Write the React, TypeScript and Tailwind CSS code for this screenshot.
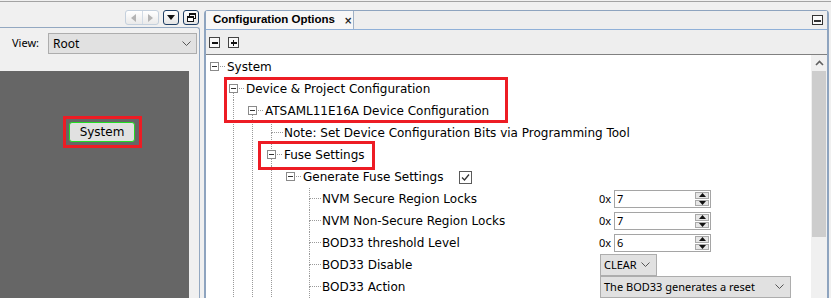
import React from "react";

// Tahoma-ish tree text and Segoe-ish control text
const treeFont = "font-['DejaVu_Sans',sans-serif] text-[12px] text-black";
const uiFont = "font-['Noto_Sans',sans-serif] text-[11px] text-black";

type Row = {
  label: string;
  depth: number;
  kind: "exp" | "leaf";
  guides: number[];
  above?: boolean;
  below?: boolean;
  check?: boolean;
  control?: React.ReactNode;
};

function Guide({ on }: { on: boolean }) {
  return (
    <svg width="19" height="22" className="shrink-0" shapeRendering="crispEdges">
      {on && <line x1="8.5" y1="0" x2="8.5" y2="22" stroke="#9a9a9a" strokeDasharray="1 1" />}
    </svg>
  );
}

function Node({ kind, above, below }: { kind: "exp" | "leaf"; above?: boolean; below?: boolean }) {
  return (
    <svg width="21" height="22" className="shrink-0" shapeRendering="crispEdges">
      {kind === "exp" ? (
        <>
          {above && <line x1="8.5" y1="0" x2="8.5" y2="6" stroke="#9a9a9a" strokeDasharray="1 1" />}
          {below && <line x1="8.5" y1="15" x2="8.5" y2="22" stroke="#9a9a9a" strokeDasharray="1 1" />}
          <rect x="4.5" y="6.5" width="8" height="8" fill="#fff" stroke="#8a8a8a" />
          <line x1="6" y1="10.5" x2="11" y2="10.5" stroke="#333" />
          <line x1="14" y1="10.5" x2="20" y2="10.5" stroke="#9a9a9a" strokeDasharray="1 1" />
        </>
      ) : (
        <>
          {above && <line x1="8.5" y1="0" x2="8.5" y2="11" stroke="#9a9a9a" strokeDasharray="1 1" />}
          {below && <line x1="8.5" y1="11" x2="8.5" y2="22" stroke="#9a9a9a" strokeDasharray="1 1" />}
          <line x1="9" y1="10.5" x2="20" y2="10.5" stroke="#9a9a9a" strokeDasharray="1 1" />
        </>
      )}
    </svg>
  );
}

function Chevron() {
  return (
    <svg width="9" height="6" viewBox="0 0 9 6" className="shrink-0">
      <polyline points="0.5,0.5 4.5,4.5 8.5,0.5" fill="none" stroke="#555" strokeWidth="1" />
    </svg>
  );
}

function Spinner({ value }: { value: string }) {
  return (
    <div className="flex items-center gap-[2px]">
      <span className={uiFont + " w-[13px]"}>0x</span>
      <div className="flex h-[18px] w-[97px] items-stretch border border-[#a5a5a5] bg-white">
        <span className={uiFont + " flex flex-1 items-center pl-[2px]"}>{value}</span>
        <div className="flex w-[16px] flex-col gap-px p-px">
          <div className="flex flex-1 items-center justify-center border border-[#a9a9a9] bg-[#e6e6e6]">
            <svg width="7" height="4"><polygon points="3.5,0 7,4 0,4" fill="#111" /></svg>
          </div>
          <div className="flex flex-1 items-center justify-center border border-[#a9a9a9] bg-[#e6e6e6]">
            <svg width="7" height="4"><polygon points="0,0 7,0 3.5,4" fill="#111" /></svg>
          </div>
        </div>
      </div>
    </div>
  );
}

function Combo({ text, width }: { text: string; width: string }) {
  return (
    <div className={`ml-px flex h-[22px] items-center justify-between border border-[#adadad] bg-[#e1e1e1] pl-[3px] pr-[6px] ${width}`}>
      <span className={uiFont}>{text}</span>
      <Chevron />
    </div>
  );
}

const rows: Row[] = [
  { label: "System", depth: 0, kind: "exp", guides: [] },
  { label: "Device & Project Configuration", depth: 1, kind: "exp", guides: [], below: true },
  { label: "ATSAML11E16A Device Configuration", depth: 2, kind: "exp", guides: [1], below: true },
  { label: "Note: Set Device Configuration Bits via Programming Tool", depth: 3, kind: "leaf", guides: [1, 2], above: true, below: true },
  { label: "Fuse Settings", depth: 3, kind: "exp", guides: [1, 2], above: true, below: true },
  { label: "Generate Fuse Settings", depth: 4, kind: "exp", guides: [1, 2, 3], check: true },
  { label: "NVM Secure Region Locks", depth: 5, kind: "leaf", guides: [1, 2, 3], above: true, below: true, control: <Spinner value="7" /> },
  { label: "NVM Non-Secure Region Locks", depth: 5, kind: "leaf", guides: [1, 2, 3], above: true, below: true, control: <Spinner value="7" /> },
  { label: "BOD33 threshold Level", depth: 5, kind: "leaf", guides: [1, 2, 3], above: true, below: true, control: <Spinner value="6" /> },
  { label: "BOD33 Disable", depth: 5, kind: "leaf", guides: [1, 2, 3], above: true, below: true, control: <Combo text="CLEAR" width="w-[57px]" /> },
  { label: "BOD33 Action", depth: 5, kind: "leaf", guides: [1, 2, 3], above: true, below: true, control: <Combo text="The BOD33 generates a reset" width="w-[191px]" /> },
];

function TreeRow({ row }: { row: Row }) {
  return (
    <div className="flex h-[22px] items-center">
      <div className="flex h-full w-[393px] shrink-0 items-center whitespace-nowrap">
        {Array.from({ length: row.depth }).map((_, i) => (
          <Guide key={i} on={row.guides.includes(i)} />
        ))}
        <Node kind={row.kind} above={row.above} below={row.below} />
        <span className={treeFont}>{row.label}</span>
        {row.check && (
          <svg width="13" height="13" className="ml-[16px] shrink-0" shapeRendering="crispEdges">
            <rect x="0.5" y="0.5" width="12" height="12" fill="#fff" stroke="#5a5a5a" />
            <polyline points="3,6.5 5.5,9 10,3.5" fill="none" stroke="#333" strokeWidth="1.3" shapeRendering="auto" />
          </svg>
        )}
      </div>
      {row.control}
    </div>
  );
}

function SmallBtn({ children, dark }: { children: React.ReactNode; dark?: boolean }) {
  return (
    <div
      className={`flex h-[15px] w-[16px] items-center justify-center rounded-[3px] bg-gradient-to-b from-white to-[#e4e4e4] ${
        dark ? "border-[1.5px] border-[#1d3d63]" : "border border-[#b7c5d6]"
      }`}
    >
      {children}
    </div>
  );
}

export default function App() {
  return (
    <div className="relative h-[298px] w-[831px] overflow-hidden bg-[#f0f0f0]">
      <div className="h-px bg-[#f0f0f0]" />
      <div className="h-px bg-[#a3a3a3]" />
      <div className="flex h-[296px]">
        {/* Left: navigator panel */}
        <div className="flex w-[200px] shrink-0 flex-col">
          <div className="flex h-[25px] items-start justify-end gap-[4px] pr-[1px] pt-[8px]">
            <div className="flex h-[15px] w-[34px] rounded-[3px] border border-[#c4d0dd] bg-gradient-to-b from-white to-[#eaeaea]">
              <div className="flex flex-1 items-center justify-center border-r border-[#d2dbe5]">
                <svg width="5" height="8"><polygon points="5,0 5,8 0,4" fill="#b4b4b4" /></svg>
              </div>
              <div className="flex flex-1 items-center justify-center">
                <svg width="5" height="8"><polygon points="0,0 0,8 5,4" fill="#b4b4b4" /></svg>
              </div>
            </div>
            <SmallBtn dark>
              <svg width="8" height="5"><polygon points="0,0 8,0 4,5" fill="#111" /></svg>
            </SmallBtn>
            <SmallBtn dark>
              <svg width="9" height="9" shapeRendering="crispEdges">
                <rect x="2.5" y="0.5" width="6" height="5" fill="none" stroke="#111" />
                <line x1="2.5" y1="1.5" x2="8.5" y2="1.5" stroke="#111" />
                <rect x="0.5" y="3.5" width="6" height="5" fill="#fff" stroke="#111" />
                <line x1="0.5" y1="4.5" x2="6.5" y2="4.5" stroke="#111" />
              </svg>
            </SmallBtn>
          </div>
          <div className="flex flex-1 flex-col rounded-tr-[3px] border-r border-t border-[#93a8c1]">
            <div className="flex items-center pl-[12px] pr-[2px] pt-[5px]">
              <span className={uiFont + " w-[36px]"}>View:</span>
              <div className="flex h-[21px] flex-1 items-center justify-between border border-[#adadad] bg-[#e1e1e1] pl-[4px] pr-[5px]">
                <span className={uiFont + " text-[12px]"}>Root</span>
                <Chevron />
              </div>
            </div>
            <div className="mt-[17px] flex-1 pr-[10px]">
              <div className="h-full bg-[#666666] pl-[63px] pt-[45px]">
                <div className="inline-flex border-[3px] border-[#ed1c24] py-[3px] pl-[3px] pr-[4px]">
                  <div className="flex h-[20px] w-[66px] items-center justify-center rounded-[3px] border border-[#22dd22] bg-[#e1e1e1]">
                    <span className={treeFont}>System</span>
                  </div>
                </div>
              </div>
            </div>
          </div>
        </div>

        {/* Right: configuration options */}
        <div className="ml-[4px] mr-[2px] mt-[8px] flex flex-1 flex-col rounded-t-[4px] border-x-2 border-t border-[#8ea4bf]">
          <div className="flex h-[18px] items-stretch bg-[#eeeeee]">
            <div className="flex w-[148px] items-center gap-[9px] rounded-tl-[3px] border-r border-[#9fb1c6] bg-[#f7f7f7] pl-[7px]">
              <span className="font-['Liberation_Sans',sans-serif] text-[11.5px] font-bold text-black">Configuration Options</span>
              <span className="font-['DejaVu_Sans',sans-serif] text-[10px] font-bold text-[#222]">×</span>
            </div>
            <div className="flex flex-1 items-center justify-end pr-[4px]">
              <svg width="11" height="10" shapeRendering="crispEdges">
                <rect x="0.5" y="0.5" width="10" height="9" fill="#fafafa" stroke="#333" />
                <rect x="2" y="5" width="7" height="2" fill="#333" />
              </svg>
            </div>
          </div>
          <div className="h-px bg-[#8fb0d8]" />
          <div className="flex h-[24px] items-center gap-[8px] bg-[#eeeeee] pl-[3px]">
            <svg width="11" height="11" shapeRendering="crispEdges">
              <rect x="0.5" y="0.5" width="10" height="10" fill="#f8f8f8" stroke="#444" />
              <rect x="2.5" y="5" width="6" height="1.5" fill="#111" />
            </svg>
            <svg width="11" height="11" shapeRendering="crispEdges">
              <rect x="0.5" y="0.5" width="10" height="10" fill="#f8f8f8" stroke="#444" />
              <rect x="2.5" y="5" width="6" height="1.5" fill="#111" />
              <rect x="4.75" y="2.75" width="1.5" height="6" fill="#111" />
            </svg>
          </div>
          <div className="flex flex-1 border-t border-[#808080] bg-white">
            <div className="flex-1 overflow-hidden pt-[1px]">
              {rows.map((r) => (
                <TreeRow key={r.label} row={r} />
              ))}
            </div>
            <div className="flex w-[16px] flex-col bg-[#f0f0f0]">
              <div className="flex h-[16px] items-center justify-center">
                <svg width="9" height="6"><polyline points="1,5 4.5,1.5 8,5" fill="none" stroke="#606060" strokeWidth="1.6" /></svg>
              </div>
              <div className="mx-px h-[166px] bg-[#cdcdcd]" />
            </div>
          </div>
        </div>
      </div>

      {/* red annotation frames */}
      <div className="pointer-events-none absolute left-[224px] top-[77px] h-[46px] w-[284px] border-[3px] border-[#ed1c24]" />
      <div className="pointer-events-none absolute left-[258px] top-[141px] h-[29px] w-[117px] border-[3px] border-[#ed1c24]" />
    </div>
  );
}
